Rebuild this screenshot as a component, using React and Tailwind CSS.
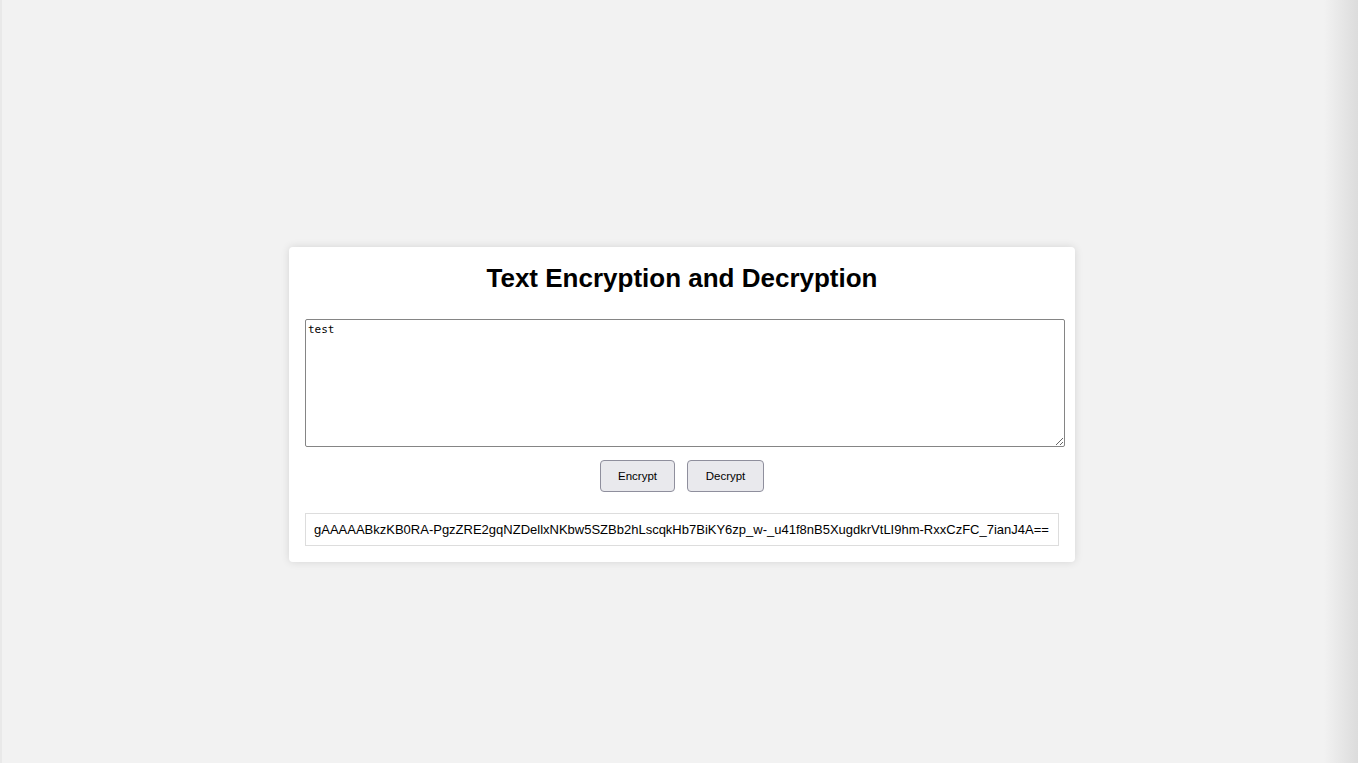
import { useState } from 'react';

const SAMPLE =
  'gAAAAABkzKB0RA-PgzZRE2gqNZDellxNKbw5SZBb2hLscqkHb7BiKY6zp_w-_u41f8nB5XugdkrVtLI9hm-RxxCzFC_7ianJ4A==';

export default function App() {
  const [text, setText] = useState('test');
  const [result, setResult] = useState(SAMPLE);

  return (
    <div className="relative flex h-[763px] w-full bg-[#f2f2f2] font-['Liberation_Sans',Arial,sans-serif] text-black">
      <div className="w-[2px] bg-[#e9e9e9]" />
      <main className="flex flex-1 items-center justify-center pl-[4px]">
        <div className="mt-[46px] w-[786px] rounded-[4px] bg-white px-4 pt-[16px] pb-[16px] shadow-[0_0_8px_rgba(0,0,0,0.12)]">
          <h2 className="text-center text-[26px] font-bold leading-[30px]">Text Encryption and Decryption</h2>

          <textarea
            value={text}
            onChange={(e) => setText(e.target.value)}
            className="mt-[26px] block h-[128px] w-[760px] resize-y rounded-[2px] border border-[#858585] px-[2px] pt-[3px] font-['DejaVu_Sans_Mono',monospace] text-[11px] leading-[14px] outline-none"
          />

          <div className="mt-[13px] flex justify-center gap-[12px]">
            <button
              onClick={() => setResult(btoa(text))}
              className="h-[32px] w-[75px] rounded-[4px] border border-[#8f8f9d] bg-[#e9e9ed] pt-[1px] text-[11.5px]"
            >
              Encrypt
            </button>
            <button
              onClick={() => setResult(text)}
              className="h-[32px] w-[77px] rounded-[4px] border border-[#8f8f9d] bg-[#e9e9ed] pt-[1px] text-[11.5px]"
            >
              Decrypt
            </button>
          </div>

          <div className="mt-[21px] w-[754px] overflow-hidden whitespace-nowrap border border-[#dddddd] px-[8px] py-[7px] text-[13px] leading-[17px]">
            {result}
          </div>
        </div>
      </main>
      {/* soft edge along the right side of the window */}
      <div className="absolute inset-y-0 right-0 w-[34px] bg-gradient-to-r from-[#f2f2f2] to-[#dcdcdc]" />
    </div>
  );
}
